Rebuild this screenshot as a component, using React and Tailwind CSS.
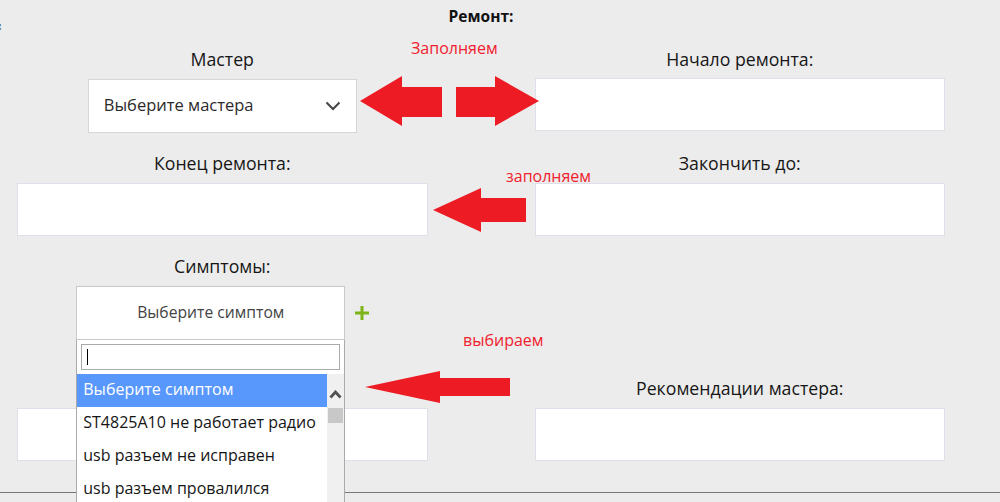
import React from 'react';

const SYMPTOMS = [
  'Выберите симптом',
  'ST4825A10 не работает радио',
  'usb разъем не исправен',
  'usb разъем провалился',
  'Не включается',
];

function Arrow({ className, width, height, points }) {
  return (
    <svg className={className} width={width} height={height} viewBox={`0 0 ${width} ${height}`}>
      <polygon points={points} fill="#ed1c24" />
    </svg>
  );
}

function Field({ label, children }) {
  return (
    <div className="flex flex-col items-center">
      <div className="h-[24px] leading-[24px] text-[17.7px] text-[#161616]">{label}</div>
      {children}
    </div>
  );
}

function TextBox() {
  return <div className="mt-[8px] h-[53px] w-full border border-[#dde0e8] bg-white" />;
}

function SymptomSelect() {
  return (
    <div className="mt-[8px] flex items-center pl-[1px]">
      <div className="relative h-[54px] w-[269px]">
        <div className="flex h-full w-full items-center justify-center border border-[#c8c8c8] bg-white pb-[1px] text-[15.7px] text-[#444]">
          Выберите симптом
        </div>

        {/* open dropdown */}
        <div className="absolute left-0 top-full z-10 h-[200px] w-[269px] border border-t-0 border-[#aaa] bg-white">
          <div className="px-[4px] pt-[4px]">
            <div className="flex h-[26px] items-center border border-[#aaa] bg-white pl-[5px]">
              <span className="h-[16px] w-px bg-black" />
            </div>
          </div>
          <div className="mt-[4px] flex">
            <div className="w-[250px]">
              {SYMPTOMS.map((s, i) => (
                <div
                  key={s}
                  className={`flex h-[33px] items-center whitespace-nowrap pb-[3px] pl-[6px] text-[16px] ${
                    i === 0 ? 'bg-[#5897fb] text-white' : 'text-[#161616]'
                  }`}
                >
                  {s}
                </div>
              ))}
            </div>
            <div className="flex h-[200px] w-[17px] flex-col items-center bg-[#f0f0f0]">
              <svg className="mt-[16px]" width="13" height="9" viewBox="0 0 13 9">
                <polyline points="1.5,7.5 6.5,2 11.5,7.5" fill="none" stroke="#505050" strokeWidth="2.8" />
              </svg>
              <div className="mt-[9px] h-[15px] w-[15px] bg-[#c8c8c8]" />
            </div>
          </div>
        </div>
      </div>
      <svg className="ml-[10px]" width="14" height="14" viewBox="0 0 14 14">
        <rect x="0" y="5.5" width="14" height="3" fill="#7cb518" />
        <rect x="5.5" y="0" width="3" height="14" fill="#7cb518" />
      </svg>
    </div>
  );
}

export default function App() {
  return (
    <div className="relative h-[502px] w-[1000px] overflow-hidden bg-[#ececec] font-['Open_Sans',sans-serif]">
      <span className="absolute left-[-6px] top-[21px] text-[11px] leading-none text-[#222]">⇕</span>

      <div className="ml-[17px] w-[928px]">
        <h2 className="flex h-[34px] items-center justify-center text-[15.5px] font-bold text-[#111]">Ремонт:</h2>

        <div className="mt-[13px] grid grid-cols-2 gap-x-[107px]">
          <Field label="Мастер">
            <div className="mt-[8px] flex h-[54px] w-[269px] items-center justify-between border border-[#d6d6d6] bg-white pl-[15px] pr-[15px] text-[16.5px] text-[#2a2a2a]">
              <span className="pb-[1px]">Выберите мастера</span>
              <svg width="16" height="10" viewBox="0 0 16 10">
                <polyline points="1.5,1.5 8,8 14.5,1.5" fill="none" stroke="#444" strokeWidth="2" />
              </svg>
            </div>
          </Field>
          <Field label="Начало ремонта:">
            <div className="mt-[-1px] w-full">
              <TextBox />
            </div>
          </Field>
        </div>

        <div className="mt-[18px] grid grid-cols-2 gap-x-[107px]">
          <Field label="Конец ремонта:">
            <TextBox />
          </Field>
          <Field label="Закончить до:">
            <TextBox />
          </Field>
        </div>

        <div className="mt-[18px] grid grid-cols-2 gap-x-[107px]">
          <Field label="Симптомы:">
            <SymptomSelect />
          </Field>
          <div />
        </div>

        <div className="mt-[36px] grid grid-cols-2 gap-x-[107px]">
          <Field label="">
            <TextBox />
          </Field>
          <Field label="Рекомендации мастера:">
            <TextBox />
          </Field>
        </div>
      </div>

      <div className="mt-[31px] border-t border-[#777]" />

      {/* annotations */}
      <span className="absolute left-[411px] top-[36px] text-[16px] text-[#f0212e]">Заполняем</span>
      <Arrow className="absolute left-[360px] top-[76px]" width={82} height={50} points="0,25 42,0 42,11 82,11 82,41 42,41 42,50" />
      <Arrow className="absolute left-[456px] top-[76px]" width={83} height={50} points="0,11 39,11 39,0 83,25 39,50 39,41 0,41" />

      <span className="absolute left-[506px] top-[164px] text-[16px] text-[#f0212e]">заполняем</span>
      <Arrow className="absolute left-[433px] top-[188px]" width={93} height={44} points="0,22 48,0 48,10 93,10 93,34 48,34 48,44" />

      <span className="absolute left-[463px] top-[328px] text-[16px] text-[#f0212e]">выбираем</span>
      <Arrow className="absolute left-[365px] top-[371px]" width={145} height={32} points="0,16 75,0 75,7 145,7 145,25 75,25 75,32" />
    </div>
  );
}
